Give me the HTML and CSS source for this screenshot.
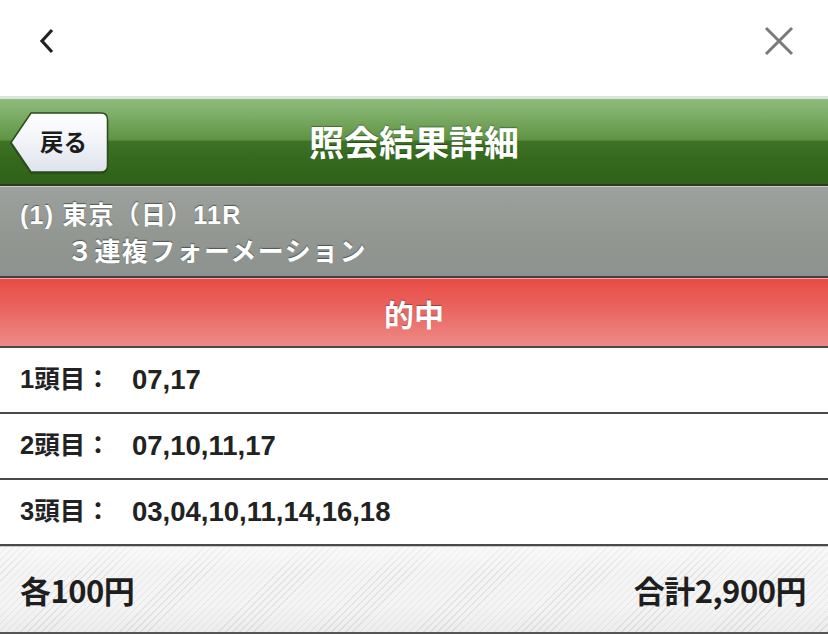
FILE: index.html
```html
<!DOCTYPE html>
<html lang="ja">
<head>
<meta charset="utf-8">
<title>照会結果詳細</title>
<link rel="stylesheet" href="styles.css">
</head>
<body>
<div class="page">
  <div class="topbar">
    <svg class="chev" width="18" height="26" viewBox="0 0 18 26"><path d="M14 2 L4 13 L14 24" fill="none" stroke="#222" stroke-width="3.2" stroke-linejoin="miter"/></svg>
    <svg class="close" width="30" height="30" viewBox="0 0 30 30"><path d="M2 2 L28 28 M28 2 L2 28" fill="none" stroke="#7a7a7a" stroke-width="3"/></svg>
  </div>
  <div class="header">
    <div class="back">
      <svg class="back-bg" width="99" height="61" viewBox="0 0 99 61">
        <defs>
          <linearGradient id="bg" x1="0" y1="0" x2="0" y2="1">
            <stop offset="0" stop-color="#ffffff"/>
            <stop offset="0.5" stop-color="#f1f3f8"/>
            <stop offset="1" stop-color="#dde2ec"/>
          </linearGradient>
        </defs>
        <path d="M1 30.5 L21 1 L91 1 Q97.5 1 97.5 7.5 L97.5 53.5 Q97.5 60 91 60 L21 60 Z" fill="url(#bg)" stroke="#2d4a20" stroke-width="1.5"/>
      </svg>
      <span class="back-label">戻る</span>
    </div>
    <div class="title">照会結果詳細</div>
    <div class="spacer"></div>
  </div>
  <div class="race">
    <div class="race-line1">(1) 東京（日）11R</div>
    <div class="race-line2">３連複フォーメーション</div>
  </div>
  <div class="hit">的中</div>
  <div class="rows">
    <div class="row"><span class="label">1頭目：</span><span class="val">07,17</span></div>
    <div class="row"><span class="label">2頭目：</span><span class="val">07,10,11,17</span></div>
    <div class="row"><span class="label">3頭目：</span><span class="val">03,04,10,11,14,16,18</span></div>
  </div>
  <div class="footer">
    <span class="amt">各100円</span>
    <span class="amt">合計2,900円</span>
  </div>
</div>
</body>
</html>
```

FILE: styles.css
```css
* { box-sizing: border-box; }
html, body { margin: 0; padding: 0; background: #fff; }
body {
  font-family: "Noto Sans CJK JP", "Noto Sans", sans-serif;
  width: 828px;
  height: 635px;
  overflow: hidden;
}
.page { width: 828px; }

.topbar {
  height: 96px;
  display: flex;
  align-items: center;
  justify-content: space-between;
  padding: 0 34px 0 38px;
  background: #fff;
}
.chev { display: block; margin-top: -14px; }
.close { display: block; margin-top: -14px; }

.header {
  height: 90px;
  display: grid;
  grid-template-columns: 1fr auto 1fr;
  align-items: center;
  border-top: 3px solid #dfe3dd;
  border-bottom: 2px solid #2c3a28;
  box-shadow: 0 1px 0 #c9ccc8;
  background: linear-gradient(to bottom,
    #8fbb7b 0%, #7cac65 20%, #5f9344 48%, #3e7326 50%, #35691d 70%, #2f6218 100%);
}
.back {
  justify-self: start;
  margin-left: 10px;
  margin-top: 1px;
  display: grid;
  width: 99px;
  height: 61px;
}
.back-bg, .back-label { grid-area: 1 / 1; }
.back-bg { display: block; filter: drop-shadow(0 1px 0 rgba(0,0,0,0.25)); }
.back-label {
  position: relative;
  z-index: 1;
  align-self: center;
  justify-self: center;
  padding-left: 8px;
  font-size: 23.5px;
  font-weight: 700;
  color: #1c1c1c;
  line-height: 1;
}
.title {
  font-size: 35px;
  font-weight: 700;
  color: #fff;
  line-height: 1;
  text-shadow: 0 -1px 1px rgba(0,0,0,0.35);
  margin-top: -2px;
}

.race {
  height: 91px;
  margin-top: 1px;
  padding: 11px 0 0 20px;
  background: linear-gradient(to bottom, #9da19d 0%, #939893 50%, #8d928e 100%);
  border-bottom: 2px solid #3f423f;
  color: #fff;
  font-weight: 700;
  text-shadow: 0 -1px 1px rgba(0,0,0,0.45);
}
.race-line1 {
  font-family: "Liberation Sans", "Noto Sans CJK JP", sans-serif;
  font-size: 25px;
  line-height: 34px;
  letter-spacing: 1.2px;
}
.race-line2 {
  font-size: 26px;
  line-height: 36px;
  letter-spacing: 1.4px;
  padding-left: 47px;
}

.hit {
  height: 70px;
  border-top: 1px solid #f4a3a0;
  border-bottom: 2px solid #4a4a4a;
  background: linear-gradient(to bottom, #e84c46 0%, #e9625d 40%, #ee8a86 100%);
  color: #fff;
  font-size: 30px;
  font-weight: 700;
  display: flex;
  align-items: center;
  justify-content: center;
  text-shadow: 0 -1px 1px rgba(0,0,0,0.35);
  line-height: 1;
}

.row {
  height: 66px;
  display: flex;
  align-items: center;
  padding-left: 20px;
  border-bottom: 2px solid #4a4a4a;
  box-shadow: 0 1px 0 #c8c8c8;
  color: #222;
  background: #fff;
  position: relative;
}
.label {
  width: 112px;
  font-family: "Liberation Sans", "Noto Sans CJK JP", sans-serif;
  font-size: 25.5px;
  font-weight: 700;
  line-height: 1;
}
.val {
  font-family: "Liberation Sans", Arial, sans-serif;
  font-size: 27.5px;
  font-weight: 700;
  line-height: 1;
}

.footer {
  height: 87px;
  margin-top: 1px;
  display: flex;
  align-items: center;
  justify-content: space-between;
  padding: 0 22px 0 20px;
  border-bottom: 2px solid #555;
  background:
    linear-gradient(to bottom, rgba(255,255,255,0.5) 0%, rgba(255,255,255,0) 30%, rgba(255,255,255,0) 70%, rgba(0,0,0,0.03) 100%),
    repeating-linear-gradient(135deg, #f4f4f4 0px, #f4f4f4 4px, #e4e4e4 4px, #e4e4e4 5px);
}
.amt {
  font-size: 31px;
  font-weight: 700;
  color: #1e1e1e;
  line-height: 1;
  letter-spacing: -0.5px;
}
```
